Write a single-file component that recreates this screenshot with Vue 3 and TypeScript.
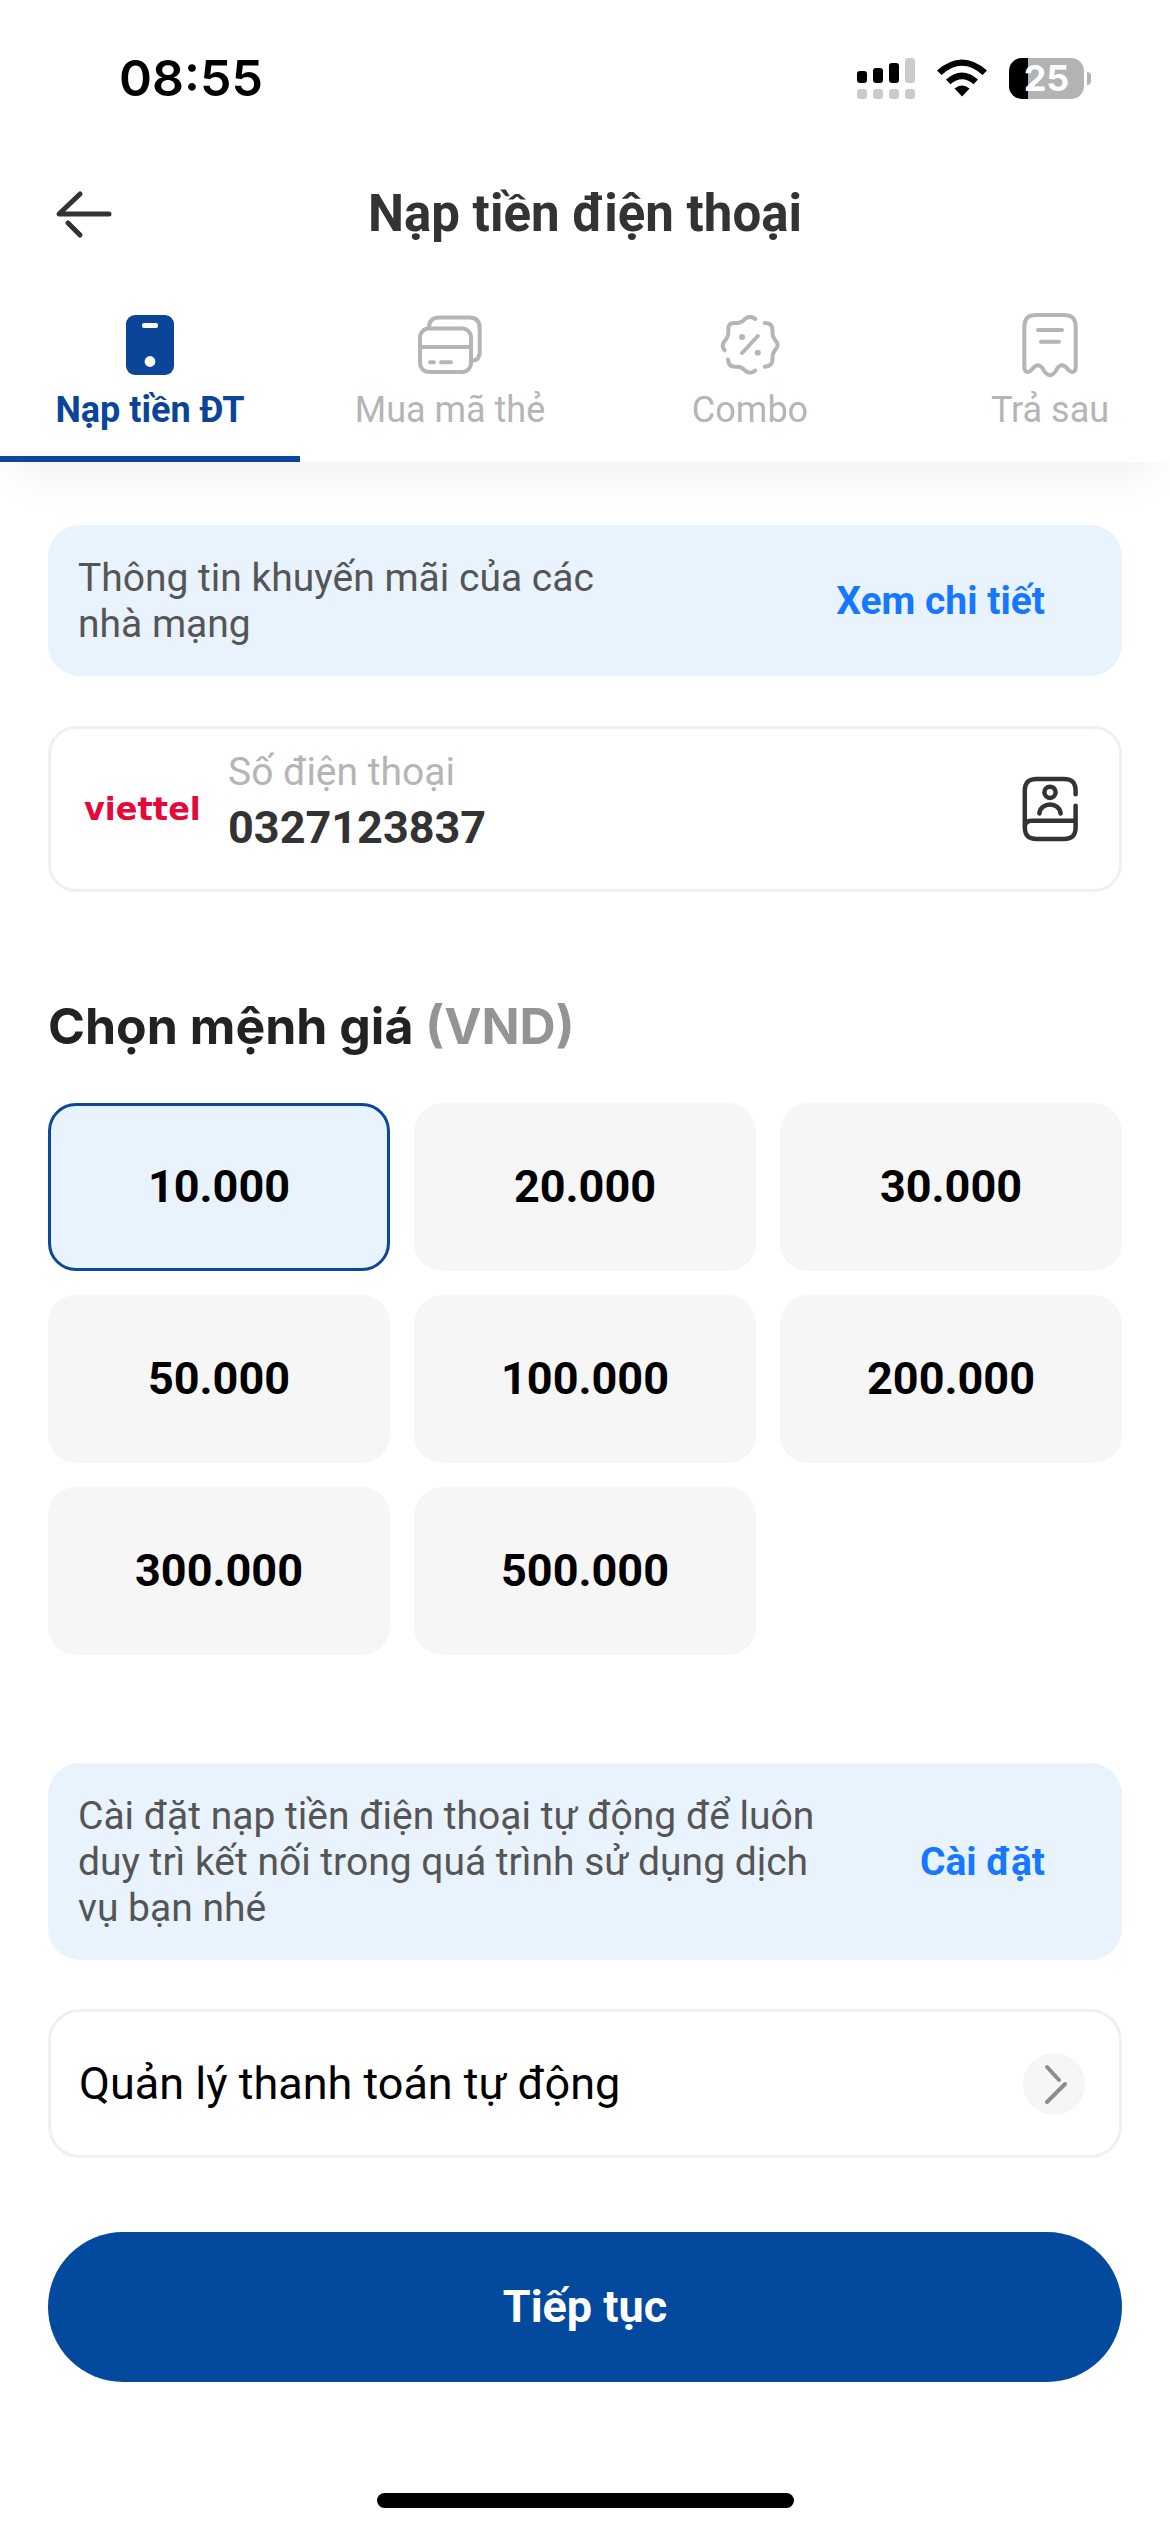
<script setup lang="ts">
import { ref } from 'vue'

type TabId = 'topup' | 'card' | 'combo' | 'postpaid'

const tabs: { id: TabId; label: string }[] = [
  { id: 'topup', label: 'Nạp tiền ĐT' },
  { id: 'card', label: 'Mua mã thẻ' },
  { id: 'combo', label: 'Combo' },
  { id: 'postpaid', label: 'Trả sau' },
]
const amounts = ['10.000', '20.000', '30.000', '50.000', '100.000', '200.000', '300.000', '500.000']

const activeTab = ref<TabId>('topup')
const amount = ref('10.000')
const phone = ref('0327123837')
</script>

<template>
  <div class="screen">
    <header class="top">
      <div class="status">
        <span class="clock">08:55</span>
        <div class="status-icons">
          <svg width="58" height="41" viewBox="0 0 58 41" aria-hidden="true">
            <rect x="0" y="13" width="10" height="12" rx="3" />
            <rect x="16" y="10" width="10" height="15" rx="3" />
            <rect x="32" y="5" width="10" height="20" rx="3" />
            <g fill="#cbcbcb">
              <rect x="48" y="0" width="10" height="25" rx="3" />
              <rect x="0" y="31" width="10" height="10" rx="3" />
              <rect x="16" y="31" width="10" height="10" rx="3" />
              <rect x="32" y="31" width="10" height="10" rx="3" />
              <rect x="48" y="31" width="10" height="10" rx="3" />
            </g>
          </svg>
          <svg width="50" height="38" viewBox="0 0 50 38" aria-hidden="true">
            <path d="M0 11.5Q25-10.500 50 11.500L45.500 16Q25-2.500 4.500 16Z" />
            <path d="M9 20.500Q25 6.500 41 20.500L36.500 25.200Q25 15.500 13.500 25.200Z" />
            <path d="M17.500 29.500Q25 23.500 32.500 29.500L25 37.500Z" />
          </svg>
          <div class="battery"><span>25</span></div>
        </div>
      </div>

      <div class="bar">
        <button class="icon-button" type="button" aria-label="Quay lại">
          <svg class="icon" viewBox="0 0 66 66" stroke-width="5">
            <path d="M29 13L8 33H58M17 42L29 54" />
          </svg>
        </button>
        <h1>Nạp tiền điện thoại</h1>
      </div>

      <nav class="tabs">
        <button
          v-for="tab in tabs"
          :key="tab.id"
          type="button"
          class="tab"
          :class="{ active: tab.id === activeTab }"
          @click="activeTab = tab.id"
        >
          <svg v-if="tab.id === 'topup'" class="icon" viewBox="0 0 66 66">
            <rect x="9" y="3" width="48" height="60" rx="9" fill="currentColor" stroke="none" />
            <rect x="25" y="11" width="16" height="5" rx="2" fill="#fff" stroke="none" />
            <circle cx="33" cy="49.500" r="5.400" fill="#fff" stroke="none" />
          </svg>
          <svg v-else-if="tab.id === 'card'" class="icon" viewBox="0 0 66 66">
            <rect x="3" y="16.500" width="51" height="43.500" rx="9" />
            <path d="M3 35H54M13 50.300H17M24 50.300H34" />
            <path d="M12 15.500C12 9 16 5.500 22 5.500H52C59 5.500 62.700 9 62.700 16V39C62.700 44.500 61 48.500 55.500 48.500" />
          </svg>
          <svg v-else-if="tab.id === 'combo'" class="icon" viewBox="0 0 66 66">
            <path
              d="M38.200 6.900Q33 2.800 28 7Q24.500 10.900 20.500 10.900H17Q11.300 11 11.300 17V21Q11.300 24.500 8.500 28Q3.300 33 7.700 38.300M11 47.500Q11.500 54.700 18 54.700H20.500Q24.500 54.700 28 58.500Q33 63 38.200 58.500M47.700 10.900Q55.500 11 55.500 18V21Q55.500 24.500 58 28Q63.300 33 58 38Q55.500 41.500 55.500 45V47.500Q55.500 54.500 47.700 54.700M40.800 24L25.100 41"
            />
            <circle cx="25.100" cy="25" r="3" fill="currentColor" stroke="none" />
            <circle cx="40.800" cy="40.700" r="3" fill="currentColor" stroke="none" />
          </svg>
          <svg v-else class="icon" viewBox="0 0 66 66">
            <path
              d="M7.300 16C7.300 6 11 3 20 3H46C55 3 58.700 6 58.700 16V54C58.700 60 56 61.500 52 58.500C47 52.500 44 51.500 40.500 56C36 65.500 30 65.500 25.500 56C22 51.500 19 52.500 14 58.500C10 61.500 7.300 60 7.300 54Z"
            />
            <path d="M21 18H45M24 29.700H42" />
          </svg>
          <span>{{ tab.label }}</span>
        </button>
      </nav>
    </header>

    <main>
      <section class="notice">
        <p class="short">Thông tin khuyến mãi của các nhà mạng</p>
        <a href="#promotions">Xem chi tiết</a>
      </section>

      <section class="phone-card">
        <span class="carrier">viettel</span>
        <div class="field">
          <label for="phone">Số điện thoại</label>
          <input id="phone" v-model="phone" type="tel" />
        </div>
        <button class="icon-button" type="button" aria-label="Danh bạ">
          <svg class="icon" viewBox="0 0 66 66" stroke-width="4.500">
            <path
              d="M58.600 18.300V15C58.600 6.500 55 3 47 3H19.500C11.500 3 7.800 6.500 7.800 15V51C7.800 59.500 11.500 63 19.500 63H47C55 63 58.600 59.500 58.600 51V29.700M7.800 51C7.800 46.500 10.500 44.700 14.800 44.700H58.600"
            />
            <circle cx="33" cy="16.300" r="5.600" />
            <path d="M22.400 37.500C23.500 25.500 42.500 25.500 43.600 37.500" />
          </svg>
        </button>
      </section>

      <h2>Chọn mệnh giá <span>(VND)</span></h2>
      <div class="amounts">
        <button
          v-for="value in amounts"
          :key="value"
          type="button"
          :class="{ selected: value === amount }"
          :aria-pressed="value === amount"
          @click="amount = value"
        >
          {{ value }}
        </button>
      </div>

      <section class="notice">
        <p>Cài đặt nạp tiền điện thoại tự động để luôn duy trì kết nối trong quá trình sử dụng dịch vụ bạn nhé</p>
        <a href="#auto-topup">Cài đặt</a>
      </section>

      <a class="manage" href="#auto-payment">
        <span>Quản lý thanh toán tự động</span>
        <svg width="62" height="62" viewBox="0 0 62 62" aria-hidden="true">
          <circle cx="31" cy="31" r="31" fill="#f6f6f6" />
          <path d="M24 14L36 27M42 31L24 49" fill="none" stroke="#8e8e8e" stroke-width="4" stroke-linecap="round" />
        </svg>
      </a>

      <button class="submit" type="button">Tiếp tục</button>
    </main>

    <div class="home-indicator"></div>
  </div>
</template>

<style>
body {
  margin: 0;
  background: #fff;
}
</style>

<style scoped>
.screen {
  font-family: Roboto, 'Liberation Sans', sans-serif;
  font-size: 39px;
  line-height: 46px;
  color: #000;
  overflow-x: hidden;
}

button {
  border: 0;
  padding: 0;
  background: none;
  font: inherit;
  color: inherit;
}

a {
  text-decoration: none;
}

.icon {
  display: block;
  width: 66px;
  height: 66px;
  fill: none;
  stroke: currentColor;
  stroke-linecap: round;
  stroke-linejoin: round;
}

.top {
  position: relative;
  background: #fff;
  box-shadow: 0 30px 44px -16px rgba(0, 0, 0, 0.06);
}

.status {
  display: flex;
  justify-content: space-between;
  align-items: center;
  height: 60px;
  padding: 48px 79px 0 119px;
}

.clock {
  font-family: Inter, sans-serif;
  font-size: 50px;
  font-weight: 600;
}

.status-icons {
  display: flex;
  align-items: center;
  gap: 22px;
}

.battery {
  position: relative;
  width: 75px;
  height: 41px;
  margin-right: 7px;
  border-radius: 13px;
  background: linear-gradient(90deg, #000 19px, #b3b3b3 19px);
  color: #fff;
  font: 700 36px/41px Inter, sans-serif;
  text-align: center;
}

.battery::after {
  content: '';
  position: absolute;
  top: 14px;
  right: -7px;
  width: 4px;
  height: 13px;
  border-radius: 0 4px 4px 0;
  background: #b3b3b3;
}

.bar {
  display: grid;
  grid-template-columns: 66px 1fr 66px;
  align-items: center;
  height: 100px;
  margin-top: 56px;
  padding: 0 51px;
  color: #333;
}

h1 {
  margin: 0;
  font-size: 51px;
  line-height: 60px;
  font-weight: 700;
  text-align: center;
}

.tabs {
  display: flex;
  overflow: hidden;
}

.tab {
  display: flex;
  flex: 1 0 300px;
  flex-direction: column;
  align-items: center;
  gap: 9px;
  padding: 48px 0 23px;
  border-bottom: 6px solid transparent;
  font-size: 36px;
  color: #b5b5b5;
  stroke-width: 4px;
}

.tab.active {
  border-color: #0b489b;
  font-weight: 700;
  color: #0b459a;
}

main {
  padding: 63px 48px 0;
}

.notice {
  display: flex;
  justify-content: space-between;
  align-items: center;
  padding: 30px 77px 29px 30px;
  border-radius: 32px;
  background: #e8f3fe;
}

.notice p {
  width: 78%;
  margin: 0;
  color: #555;
}

.notice .short {
  width: 56%;
}

.notice a {
  font-weight: 700;
  color: #1677ff;
}

.phone-card {
  display: flex;
  align-items: center;
  gap: 26px;
  margin-top: 50px;
  padding: 20px 36px 20px 33px;
  border: 3px solid #f0f0f0;
  border-radius: 28px;
}

.carrier {
  width: 118px;
  font: 700 32px/46px 'DejaVu Sans', sans-serif;
  color: #e4093b;
}

.field {
  display: flex;
  flex: 1;
  flex-direction: column;
  gap: 6px;
  padding-bottom: 14px;
}

.field label {
  color: #b5b5b5;
}

.field input {
  width: 100%;
  height: 54px;
  padding: 0;
  border: 0;
  outline: 0;
  background: none;
  font: 700 45px/54px Roboto, sans-serif;
  color: #333;
}

.phone-card .icon-button {
  color: #333;
}

h2 {
  margin: 104px 0 47px;
  font: 700 50px/60px Inter, sans-serif;
  color: #222;
}

h2 span {
  color: #949494;
}

.amounts {
  display: grid;
  grid-template-columns: repeat(3, 1fr);
  gap: 24px;
  margin-bottom: 108px;
}

.amounts button {
  height: 168px;
  border: 3px solid transparent;
  border-radius: 28px;
  background: #f6f6f6;
  font-size: 45px;
  font-weight: 700;
}

.amounts .selected {
  border-color: #0b489b;
  background: #e8f3fe;
}

.manage {
  display: flex;
  justify-content: space-between;
  align-items: center;
  margin-top: 49px;
  padding: 41px 34px 40px 28px;
  border: 3px solid #f0f0f0;
  border-radius: 32px;
  font-size: 45px;
  color: #000;
}

.submit {
  display: block;
  width: 100%;
  height: 150px;
  margin-top: 74px;
  border-radius: 75px;
  background: #034a9e;
  font-size: 45px;
  font-weight: 700;
  color: #fff;
}

.home-indicator {
  width: 417px;
  height: 15px;
  margin: 111px auto 24px;
  border-radius: 8px;
  background: #000;
}
</style>
